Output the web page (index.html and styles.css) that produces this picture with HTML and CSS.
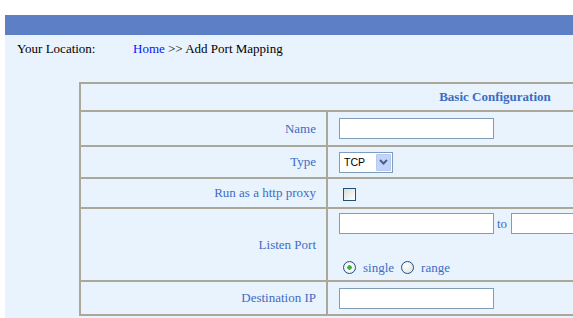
FILE: index.html
```html
<!DOCTYPE html>
<html>
<head>
<title>Add Port Mapping</title>
<link rel="stylesheet" href="styles.css">
</head>
<body>
<div id="page">
  <!-- top bar -->
  <div id="topbar"></div>

  <!-- location line -->
  <div id="location">
    <span class="loc-label">Your Location:</span>
    <span><a href="#" class="home">Home</a> &gt;&gt; Add Port Mapping</span>
  </div>

  <!-- config form -->
  <table id="config">
    <tr class="row-head">
      <td colspan="2" class="head">Basic Configuration</td>
    </tr>
    <tr class="row-name">
      <td class="label">Name</td>
      <td class="field"><input type="text" class="text"></td>
    </tr>
    <tr class="row-type">
      <td class="label">Type</td>
      <td class="field">
        <span class="select">
          <select>
            <option>TCP</option>
            <option>UDP</option>
          </select>
          <span class="select-btn">
            <svg width="9" height="6" viewBox="0 0 9 6"><path d="M1 1 L4.5 4.5 L8 1" fill="none" stroke="#4d6185" stroke-width="2"/></svg>
          </span>
        </span>
      </td>
    </tr>
    <tr class="row-proxy">
      <td class="label">Run as a http proxy</td>
      <td class="field"><input type="checkbox" class="check"></td>
    </tr>
    <tr class="row-port">
      <td class="label">Listen Port</td>
      <td class="field">
        <div class="port-line">
          <input type="text" class="text">
          <span class="to">to</span>
          <input type="text" class="text">
        </div>
        <div class="radio-line">
          <label><input type="radio" name="mode" class="radio" checked> single</label>
          <label><input type="radio" name="mode" class="radio"> range</label>
        </div>
      </td>
    </tr>
    <tr class="row-dest">
      <td class="label">Destination IP</td>
      <td class="field"><input type="text" class="text"></td>
    </tr>
  </table>
</div>
</body>
</html>
```

FILE: styles.css
```css
body {
margin: 0;
background: white;
overflow: hidden;
font-family: "Liberation Serif", "Times New Roman", serif;
font-size: 13px;
}
#page {
margin: 15px 0 0 5px;
background: #e8f3fe;
height: 303px;
}
#topbar {
height: 20px;
background: #5d7fc5;
}
#location {
display: flex;
padding: 6px 0 0 12px;
height: 19px;
line-height: 15px;
color: black;
}
.loc-label {
width: 116px;
}
.home {
color: #0a14ff;
text-decoration: none;
}
#config {
margin: 22px 0 0 74px;
width: 832px;
border: 1px solid #aca899;
border-spacing: 0;
}
#config td {
border: 1px solid #aca899;
padding: 0;
}
.head {
height: 26px;
text-align: center;
font-weight: bold;
color: #3d6cbf;
}
.label {
width: 235px;
padding-right: 10px !important;
text-align: right;
color: #3f6cc4;
}
.field {
padding-left: 11px !important;
}
.row-name td {
height: 33px;
}
.row-type td {
height: 30px;
}
.row-proxy td {
height: 28px;
}
.row-port td {
height: 71px;
}
.row-dest td {
height: 32px;
}
.text {
box-sizing: border-box;
width: 155px;
height: 21px;
border: 1px solid #7f9db9;
background: white;
margin: 0;
padding: 0 3px;
vertical-align: middle;
}
.select {
display: inline-flex;
align-items: center;
box-sizing: border-box;
width: 54px;
height: 21px;
border: 1px solid #7f9db9;
background: white;
vertical-align: middle;
}
.select select {
appearance: none;
border: none;
background: transparent;
font-family: "Liberation Sans", Arial, sans-serif;
font-size: 10.5px;
color: black;
padding: 0 0 0 4px;
width: 36px;
outline: none;
}
.select-btn {
display: flex;
align-items: center;
justify-content: center;
box-sizing: border-box;
width: 15px;
height: 17px;
background: #c3d4fb;
border: 1px solid #b6c9f4;
border-radius: 1px;
}
.check {
appearance: none;
box-sizing: border-box;
width: 13px;
height: 13px;
margin: 0 0 0 4px;
border: 1px solid #1c5180;
background: linear-gradient(135deg, #dcdcd6, #ffffff);
vertical-align: middle;
}
.port-line {
display: flex;
align-items: center;
gap: 3px;
margin-top: 4px;
color: #3f6cc4;
}
.port-line .text:last-child {
width: 120px;
margin-left: 1px;
}
.radio-line {
display: flex;
gap: 7px;
margin: 26px 0 5px 4px;
line-height: 15px;
color: #3f6cc4;
}
.radio-line label {
display: flex;
align-items: center;
gap: 7px;
}
.radio {
appearance: none;
box-sizing: border-box;
width: 13px;
height: 13px;
margin: 0;
border: 1px solid #1c5180;
border-radius: 50%;
background: radial-gradient(circle at 35% 35%, #ffffff, #dcdcd6);
}
.radio:checked {
background: radial-gradient(circle, #3fb23c 0, #3fb23c 2px, #ffffff 2.5px, #dcdcd6 100%);
}
```
